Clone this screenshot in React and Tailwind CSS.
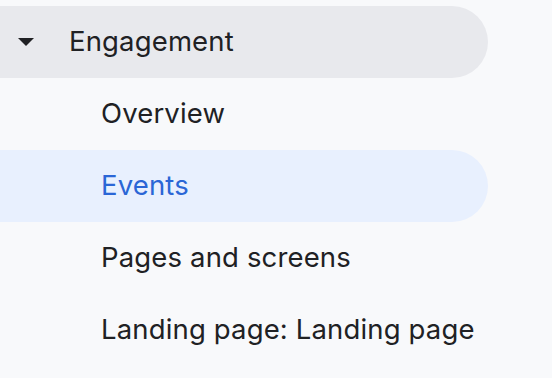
export default function App() {
  const font = { fontFamily: 'Inter, Roboto, "Noto Sans", sans-serif' };
  return (
    <div className="w-[552px] h-[378px] bg-[#f8f9fb] pt-[6px] overflow-hidden" style={font}>
      <div className="flex flex-col w-[488px]">
        <div className="flex items-center h-[72px] bg-[#e8e9ed] rounded-r-full">
          <div className="w-[69px] flex items-center pl-[18px]">
            <svg width="16" height="8" viewBox="0 0 16 8">
              <path d="M0 0 L16 0 L8 8 Z" fill="#202124" />
            </svg>
          </div>
          <span className="text-[27.5px] tracking-[0.15px] text-[#202124]">Engagement</span>
        </div>
        <div className="flex items-center h-[72px] pl-[101px]">
          <span className="text-[27.5px] tracking-[0.15px] text-[#202124]">Overview</span>
        </div>
        <div className="flex items-center h-[72px] pl-[101px] bg-[#e8f0fe] rounded-r-full">
          <span className="text-[27.5px] tracking-[0.15px] text-[#2a66d6]">Events</span>
        </div>
        <div className="flex items-center h-[72px] pl-[101px]">
          <span className="text-[27.5px] tracking-[0.15px] text-[#202124]">Pages and screens</span>
        </div>
        <div className="flex items-center h-[72px] pl-[101px]">
          <span className="text-[27.5px] tracking-[0.15px] text-[#202124]">Landing page: Landing page</span>
        </div>
      </div>
    </div>
  );
}
